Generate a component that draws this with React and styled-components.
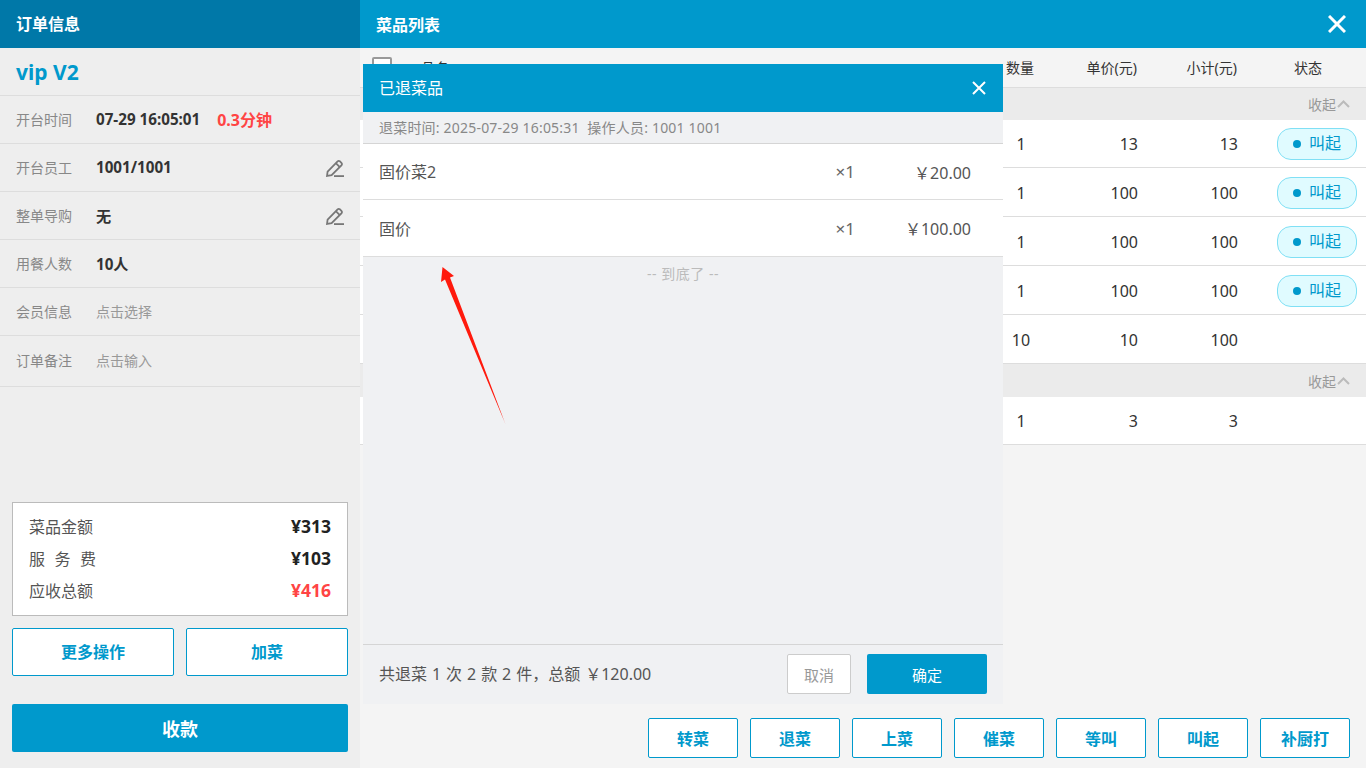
import React from "react";
import styled, { createGlobalStyle } from "styled-components";

const FONT = `"Noto Sans", "Noto Sans CJK SC", sans-serif`;
const BLUE = "#0099cc";

const Global = createGlobalStyle`
  html, body { margin: 0; padding: 0; width: 1366px; height: 768px; overflow: hidden; font-family: ${FONT}; }
  * { box-sizing: border-box; }
`;

const Page = styled.div`
  position: relative;
  display: flex;
  width: 1366px;
  height: 768px;
  overflow: hidden;
`;

/* left panel */
const Side = styled.aside`
  width: 360px;
  flex: none;
  display: flex;
  flex-direction: column;
  background: #eeeeee;
`;
const SideHeader = styled.header`
  height: 48px;
  background: #0078a8;
  color: #fff;
  font-size: 16px;
  font-weight: 700;
  line-height: 48px;
  padding-left: 16px;
`;
const TableName = styled.div`
  height: 48px;
  padding-left: 16px;
  border-bottom: 1px solid #dddddd;
  color: ${BLUE};
  font-size: 21px;
  font-weight: 700;
  line-height: 49px;
`;
const InfoRow = styled.div`
  height: ${(p) => p.$h || 48}px;
  display: flex;
  align-items: center;
  padding: 0 15px 2px 16px;
  border-bottom: 1px solid #dddddd;
`;
const InfoLabel = styled.span`
  width: 80px;
  color: #888888;
  font-size: 14px;
`;
const InfoValue = styled.span`
  color: #333333;
  font-size: 15.2px;
  font-weight: 700;
`;
const InfoHint = styled.span`
  color: #999999;
  font-size: 14px;
`;
const Elapsed = styled.span`
  margin-left: 17px;
  color: #ff4444;
  font-size: 16px;
  font-weight: 700;
`;
const EditIcon = styled.svg`
  margin: 2px 0 0 auto;
  width: 20px;
  height: 20px;
  fill: none;
  stroke: #777777;
  stroke-width: 1.8;
`;
const SideBottom = styled.div`
  margin-top: auto;
  padding: 0 12px 16px;
  display: flex;
  flex-direction: column;
`;
const Summary = styled.div`
  height: 114px;
  padding: 7px 16px 11px;
  background: #fff;
  border: 1px solid #bbbbbb;
`;
const SummaryRow = styled.div`
  height: 32px;
  display: flex;
  align-items: center;
  justify-content: space-between;
`;
const SummaryLabel = styled.span`
  color: #555555;
  font-size: 16px;
  letter-spacing: ${(p) => (p.$spaced ? "9.5px" : "0")};
`;
const SummaryValue = styled.span`
  color: ${(p) => (p.$red ? "#ff4444" : "#222222")};
  font-size: 17.5px;
  font-weight: 700;
`;
const ActionPair = styled.div`
  margin-top: 12px;
  display: flex;
  gap: 12px;
`;
const OutlineButton = styled.button`
  flex: ${(p) => (p.$fill ? 1 : "none")};
  width: ${(p) => (p.$fill ? "auto" : "90px")};
  height: ${(p) => (p.$fill ? 48 : 40)}px;
  padding: 0 0 ${(p) => (p.$fill ? 2 : 0)}px;
  background: #fff;
  border: 1px solid ${BLUE};
  border-radius: 2px;
  color: ${BLUE};
  font-family: ${FONT};
  font-size: 16px;
  font-weight: 700;
`;
const PayButton = styled.button`
  margin-top: 28px;
  height: 48px;
  background: ${BLUE};
  border: 0;
  border-radius: 2px;
  color: #fff;
  font-family: ${FONT};
  font-size: 18px;
  font-weight: 700;
`;

/* main panel */
const Main = styled.main`
  flex: 1;
  display: flex;
  flex-direction: column;
  background: #f4f4f4;
`;
const MainHeader = styled.header`
  height: 48px;
  flex: none;
  display: flex;
  align-items: center;
  justify-content: space-between;
  padding: 0 20px 0 16px;
  background: ${BLUE};
  color: #fff;
  font-size: 16px;
  font-weight: 700;
`;
const CloseIcon = styled.svg`
  width: ${(p) => p.$size}px;
  height: ${(p) => p.$size}px;
  fill: none;
  stroke: #fff;
  stroke-width: ${(p) => p.$weight};
`;
const TableArea = styled.div`
  flex: 1;
`;
const COLUMNS = "640px 42px 96px 100px 128px";
const HeadRow = styled.div`
  height: 40px;
  display: grid;
  grid-template-columns: ${COLUMNS};
  align-items: center;
  padding-bottom: 2px;
  border-bottom: 1px solid #dddddd;
  color: #333333;
  font-size: 14px;
`;
const HeadName = styled.div`
  display: flex;
  align-items: center;
  gap: 29px;
  padding: 0 0 0 12px;
`;
const CheckBox = styled.span`
  width: 20px;
  height: 20px;
  background: #fff;
  border: 2px solid #999999;
  border-radius: 2px;
`;
const HeadQty = styled.span`
  padding-right: 2px;
  text-align: center;
`;
const HeadNum = styled.span`
  padding-right: 1px;
  text-align: right;
`;
const HeadStatus = styled.span`
  padding-left: 56px;
`;
const GroupBar = styled.div`
  height: ${(p) => p.$h}px;
  display: flex;
  align-items: center;
  justify-content: flex-end;
  gap: 1px;
  padding: ${(p) => (p.$h > 32 ? 1 : 0)}px 16px 0 0;
  background: #ebebeb;
  color: #999999;
  font-size: 14px;
`;
const Chevron = styled.svg`
  width: 13px;
  height: 8px;
  fill: none;
  stroke: #bbbbbb;
  stroke-width: 2;
`;
const DishRow = styled.div`
  height: ${(p) => (p.$first ? 48 : 49)}px;
  display: grid;
  grid-template-columns: ${COLUMNS};
  align-items: center;
  padding-top: ${(p) => (p.$first ? 0 : 2)}px;
  background: #fff;
  border-bottom: 1px solid #dddddd;
  color: #333333;
  font-size: 16px;
`;
const DishQty = styled.span`
  text-align: center;
`;
const DishNum = styled.span`
  text-align: right;
`;
const DishStatus = styled.span`
  display: flex;
  justify-content: flex-end;
  padding-right: 9px;
`;
const Pill = styled.span`
  width: 80px;
  height: 32px;
  margin-top: ${(p) => (p.$first ? 1 : 0)}px;
  display: flex;
  align-items: center;
  gap: 8px;
  padding: 0 0 4px 15px;
  background: #e0fbff;
  border: 1px solid #80e0f5;
  border-radius: 14px;
  color: ${BLUE};
  font-size: 16px;
`;
const Dot = styled.i`
  width: 8px;
  height: 8px;
  margin-top: 4px;
  border-radius: 50%;
  background: ${BLUE};
`;
const Footer = styled.footer`
  height: 50px;
  flex: none;
  display: flex;
  justify-content: flex-end;
  gap: 12px;
  padding-right: 16px;
`;

/* modal */
const Modal = styled.section`
  position: absolute;
  left: 363px;
  top: 64px;
  width: 640px;
  height: 640px;
  display: flex;
  flex-direction: column;
  background: #f0f1f3;
`;
const ModalHeader = styled.header`
  height: 48px;
  flex: none;
  display: flex;
  align-items: center;
  justify-content: space-between;
  padding: 0 17px 0 16px;
  background: ${BLUE};
  color: #fff;
  font-size: 16px;
`;
const ModalTitle = styled.span`
  padding-bottom: 2px;
`;
const RefundInfo = styled.div`
  height: 32px;
  flex: none;
  padding-left: 16px;
  border-bottom: 1px solid #d5d5d5;
  color: #888888;
  font-size: 14px;
  letter-spacing: 0.2px;
  line-height: 31px;
  white-space: pre;
`;
const RefundRow = styled.div`
  height: ${(p) => p.$h}px;
  flex: none;
  display: grid;
  grid-template-columns: 1fr 60px 116px;
  align-items: center;
  padding: 0 32px 0 16px;
  background: #fff;
  border-bottom: 1px solid #dddddd;
  color: #555555;
  font-size: 16px;
`;
const RefundName = styled.span`
  padding-bottom: ${(p) => (p.$lift ? 2 : 0)}px;
`;
const RefundCount = styled.span`
  text-align: right;
  color: #666666;
  font-size: 17px;
`;
const RefundPrice = styled.span`
  text-align: right;
`;
const EndMark = styled.div`
  height: 34px;
  flex: none;
  text-align: center;
  color: #bbbbbb;
  font-size: 14px;
  letter-spacing: 0.5px;
  line-height: 33px;
`;
const ModalFooter = styled.footer`
  height: 60px;
  flex: none;
  margin-top: auto;
  display: flex;
  align-items: center;
  gap: 16px;
  padding: 0 16px 1px;
  border-top: 1px solid #d5d5d5;
  color: #555555;
  font-size: 16px;
`;
const FooterSummary = styled.span`
  flex: 1;
  padding-bottom: 2px;
  word-spacing: 0.8px;
`;
const CancelButton = styled.button`
  width: 64px;
  height: 40px;
  padding: 0;
  background: #fff;
  border: 1px solid #cccccc;
  border-radius: 2px;
  color: #999999;
  font-family: ${FONT};
  font-size: 15px;
`;
const ConfirmButton = styled.button`
  width: 120px;
  height: 40px;
  padding: 0;
  background: ${BLUE};
  border: 0;
  border-radius: 2px;
  color: #fff;
  font-family: ${FONT};
  font-size: 15px;
`;
const Arrow = styled.svg`
  position: absolute;
  left: 436px;
  top: 262px;
  width: 76px;
  height: 168px;
`;

const Edit = () => (
  <EditIcon viewBox="0 0 20 20">
    <path d="M2 18 L2.6 13.6 L12.6 3.4 Q13.6 2.4 14.8 3.2 L16.6 5 Q17.5 6 16.6 7.2 L6.6 17.2 Z" />
    <path d="M10.8 5.2 L14.8 9.2" />
    <path d="M9 18.1 H19" />
  </EditIcon>
);

const X = ({ size, weight }) => (
  <CloseIcon $size={size} $weight={weight} viewBox={`0 0 ${size} ${size}`}>
    <path d={`M1 1 L${size - 1} ${size - 1} M${size - 1} 1 L1 ${size - 1}`} />
  </CloseIcon>
);

const Collapse = ({ h }) => (
  <GroupBar $h={h}>
    收起
    <Chevron viewBox="0 0 13 8">
      <path d="M1 7 L6.5 1.5 L12 7" />
    </Chevron>
  </GroupBar>
);

const Dish = ({ qty, price, total, called, first }) => (
  <DishRow $first={first}>
    <span />
    <DishQty>{qty}</DishQty>
    <DishNum>{price}</DishNum>
    <DishNum>{total}</DishNum>
    <DishStatus>
      {called && (
        <Pill $first={first}>
          <Dot />
          叫起
        </Pill>
      )}
    </DishStatus>
  </DishRow>
);

export default function App() {
  return (
    <Page>
      <Global />
      <Side>
        <SideHeader>订单信息</SideHeader>
        <TableName>vip V2</TableName>
        <InfoRow>
          <InfoLabel>开台时间</InfoLabel>
          <InfoValue>07-29 16:05:01</InfoValue>
          <Elapsed>0.3分钟</Elapsed>
        </InfoRow>
        <InfoRow>
          <InfoLabel>开台员工</InfoLabel>
          <InfoValue>1001/1001</InfoValue>
          <Edit />
        </InfoRow>
        <InfoRow>
          <InfoLabel>整单导购</InfoLabel>
          <InfoValue>无</InfoValue>
          <Edit />
        </InfoRow>
        <InfoRow>
          <InfoLabel>用餐人数</InfoLabel>
          <InfoValue>10人</InfoValue>
        </InfoRow>
        <InfoRow>
          <InfoLabel>会员信息</InfoLabel>
          <InfoHint>点击选择</InfoHint>
        </InfoRow>
        <InfoRow $h={51}>
          <InfoLabel>订单备注</InfoLabel>
          <InfoHint>点击输入</InfoHint>
        </InfoRow>
        <SideBottom>
          <Summary>
            <SummaryRow>
              <SummaryLabel>菜品金额</SummaryLabel>
              <SummaryValue>¥313</SummaryValue>
            </SummaryRow>
            <SummaryRow>
              <SummaryLabel $spaced>服务费</SummaryLabel>
              <SummaryValue>¥103</SummaryValue>
            </SummaryRow>
            <SummaryRow>
              <SummaryLabel>应收总额</SummaryLabel>
              <SummaryValue $red>¥416</SummaryValue>
            </SummaryRow>
          </Summary>
          <ActionPair>
            <OutlineButton $fill>更多操作</OutlineButton>
            <OutlineButton $fill>加菜</OutlineButton>
          </ActionPair>
          <PayButton>收款</PayButton>
        </SideBottom>
      </Side>

      <Main>
        <MainHeader>
          菜品列表
          <X size={18} weight={3} />
        </MainHeader>
        <TableArea>
          <HeadRow>
            <HeadName>
              <CheckBox />
              品名
            </HeadName>
            <HeadQty>数量</HeadQty>
            <HeadNum>单价(元)</HeadNum>
            <HeadNum>小计(元)</HeadNum>
            <HeadStatus>状态</HeadStatus>
          </HeadRow>
          <Collapse h={32} />
          <Dish first qty="1" price="13" total="13" called />
          <Dish qty="1" price="100" total="100" called />
          <Dish qty="1" price="100" total="100" called />
          <Dish qty="1" price="100" total="100" called />
          <Dish qty="10" price="10" total="100" />
          <Collapse h={33} />
          <Dish first qty="1" price="3" total="3" />
        </TableArea>
        <Footer>
          <OutlineButton>转菜</OutlineButton>
          <OutlineButton>退菜</OutlineButton>
          <OutlineButton>上菜</OutlineButton>
          <OutlineButton>催菜</OutlineButton>
          <OutlineButton>等叫</OutlineButton>
          <OutlineButton>叫起</OutlineButton>
          <OutlineButton>补厨打</OutlineButton>
        </Footer>
      </Main>

      <Modal>
        <ModalHeader>
          <ModalTitle>已退菜品</ModalTitle>
          <X size={14} weight={2} />
        </ModalHeader>
        <RefundInfo>退菜时间: 2025-07-29 16:05:31  操作人员: 1001 1001</RefundInfo>
        <RefundRow $h={56}>
          <RefundName $lift>固价菜2</RefundName>
          <RefundCount>×1</RefundCount>
          <RefundPrice>￥20.00</RefundPrice>
        </RefundRow>
        <RefundRow $h={57}>
          <RefundName>固价</RefundName>
          <RefundCount>×1</RefundCount>
          <RefundPrice>￥100.00</RefundPrice>
        </RefundRow>
        <EndMark>-- 到底了 --</EndMark>
        <ModalFooter>
          <FooterSummary>共退菜 1 次 2 款 2 件，总额 ￥120.00</FooterSummary>
          <CancelButton>取消</CancelButton>
          <ConfirmButton>确定</ConfirmButton>
        </ModalFooter>
      </Modal>

      <Arrow viewBox="436 262 76 168">
        <defs>
          <linearGradient id="arrowFade" x1="442" y1="267" x2="505.5" y2="425" gradientUnits="userSpaceOnUse">
            <stop offset="0" stopColor="#ff1a0d" />
            <stop offset="0.94" stopColor="#ff1a0d" />
            <stop offset="1" stopColor="#ff1a0d" stopOpacity="0.3" />
          </linearGradient>
        </defs>
        <polygon
          points="442.5,267 454,276 450,277.5 505.8,425 445,279.5 441,282"
          fill="url(#arrowFade)"
        />
      </Arrow>
    </Page>
  );
}
